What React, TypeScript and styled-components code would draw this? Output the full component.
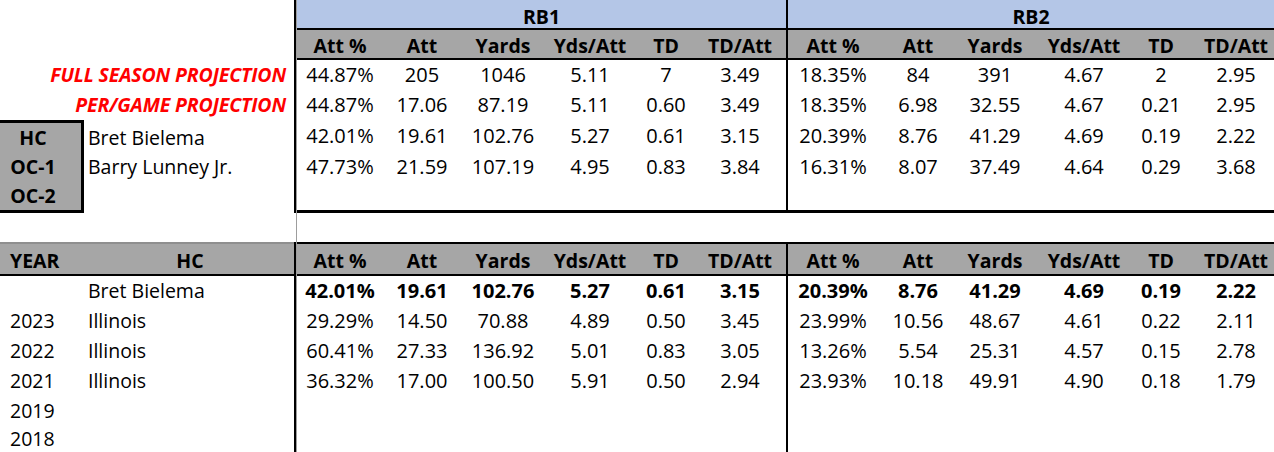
import React from "react";
import styled, { createGlobalStyle } from "styled-components";

const GlobalStyle = createGlobalStyle`
  *, *::before, *::after { box-sizing: border-box; }
  html, body { margin: 0; padding: 0; background: #ffffff; }
  body {
    font-family: "Open Sans", "Liberation Sans", sans-serif;
    font-size: 19.5px;
    color: #000000;
    overflow: hidden;
  }
`;

const BLUE = "#b4c6e7";
const GRAY = "#a6a6a6";

const Sheet = styled.div`
  display: flex;
  width: 1274px;
  height: 452px;
  overflow: hidden;
  line-height: 1;
`;

const LeftPane = styled.div`
  width: 296px;
  flex: none;
  display: flex;
  flex-direction: column;
`;

const RightPane = styled.div`
  flex: 1;
  min-width: 0;
  border-left: 1px solid #9d9d9d;
  display: flex;
  flex-direction: column;
`;

const UpperLeft = styled.div`
  height: 213px;
  flex: none;
  border-right: 2px solid #000;
  padding-top: 60px;
  display: flex;
  flex-direction: column;
`;

const ProjectionLabel = styled.div`
  height: 30px;
  display: flex;
  align-items: center;
  justify-content: flex-end;
  padding-right: 8px;
  color: #ff0000;
  font-weight: 700;
  font-style: italic;
  letter-spacing: -0.15px;
  white-space: nowrap;
`;

const CoachBlock = styled.div`
  display: flex;
`;

const RoleBox = styled.div`
  margin-left: -18px;
  width: 102px;
  border: 3px solid #000;
  background: ${GRAY};
  display: flex;
  flex-direction: column;
`;

const RoleCell = styled.div<{ $h: number }>`
  height: ${(p) => p.$h}px;
  display: flex;
  align-items: center;
  justify-content: center;
  font-weight: 700;
`;

const NameList = styled.div`
  display: flex;
  flex-direction: column;
  padding-top: 3px;
  padding-left: 4px;
`;

const NameCell = styled.div<{ $h: number }>`
  height: ${(p) => p.$h}px;
  display: flex;
  align-items: center;
  white-space: nowrap;
`;

const Gap = styled.div`
  height: 29px;
  flex: none;
`;

const LowerLeft = styled.div`
  flex: 1;
  border-right: 2px solid #000;
  display: flex;
  flex-direction: column;
`;

const LeftHeader = styled.div`
  height: 34px;
  flex: none;
  display: grid;
  grid-template-columns: 86px 1fr;
  align-items: center;
  background: ${GRAY};
  border-top: 2px solid #8f8f8f;
  border-bottom: 2px solid #000;
  padding-top: 3px;
  font-weight: 700;
`;

const YearHead = styled.div`
  padding-left: 10px;
`;

const CoachHead = styled.div`
  text-align: center;
`;

const LeftRow = styled.div<{ $h: number }>`
  height: ${(p) => p.$h}px;
  flex: none;
  display: grid;
  grid-template-columns: 86px 1fr;
  align-items: center;
`;

const YearCell = styled.div`
  padding-left: 10px;
`;

const TeamCell = styled.div`
  padding-left: 2px;
  white-space: nowrap;
`;

const Section = styled.div<{ $upper?: boolean }>`
  display: flex;
  flex: ${(p) => (p.$upper ? "none" : "1")};
  height: ${(p) => (p.$upper ? "213px" : "auto")};
`;

const Group = styled.div<{ $first?: boolean; $upper?: boolean }>`
  width: ${(p) => (p.$first ? "491px" : "auto")};
  flex: ${(p) => (p.$first ? "none" : "1")};
  min-width: 0;
  overflow: hidden;
  display: flex;
  flex-direction: column;
  border-right: ${(p) => (p.$first ? "2px solid #000" : "none")};
  border-bottom: ${(p) => (p.$upper ? "3px solid #000" : "none")};
  border-top: ${(p) => (p.$upper ? "none" : "2px solid #000")};
`;

const Title = styled.div`
  height: 30px;
  flex: none;
  background: ${BLUE};
  border-bottom: 2px solid #000;
  display: flex;
  align-items: center;
  justify-content: center;
  padding-top: 6px;
  font-weight: 700;
`;

const HeaderRow = styled.div<{ $cols: string; $h: number }>`
  height: ${(p) => p.$h}px;
  flex: none;
  display: grid;
  grid-template-columns: ${(p) => p.$cols};
  align-items: center;
  background: ${GRAY};
  border-bottom: 2px solid #000;
  padding-top: 3px;
  font-weight: 700;
  white-space: nowrap;
`;

const DataRow = styled.div<{ $cols: string; $h: number; $bold?: boolean }>`
  height: ${(p) => p.$h}px;
  flex: none;
  display: grid;
  grid-template-columns: ${(p) => p.$cols};
  align-items: center;
  font-size: 20px;
  font-weight: ${(p) => (p.$bold ? 700 : 400)};
  white-space: nowrap;
`;

const Cell = styled.div`
  text-align: center;
`;

const HEADS = ["Att %", "Att", "Yards", "Yds/Att", "TD", "TD/Att"];
const RB1_COLS = "86px 78px 84px 90px 62px 86px";
const RB2_COLS = "90px 80px 74px 104px 50px 100px";

type Row = string[];
const EMPTY: Row = ["", "", "", "", "", ""];

const rb1Upper: Row[] = [
  ["44.87%", "205", "1046", "5.11", "7", "3.49"],
  ["44.87%", "17.06", "87.19", "5.11", "0.60", "3.49"],
  ["42.01%", "19.61", "102.76", "5.27", "0.61", "3.15"],
  ["47.73%", "21.59", "107.19", "4.95", "0.83", "3.84"],
  EMPTY,
];
const rb2Upper: Row[] = [
  ["18.35%", "84", "391", "4.67", "2", "2.95"],
  ["18.35%", "6.98", "32.55", "4.67", "0.21", "2.95"],
  ["20.39%", "8.76", "41.29", "4.69", "0.19", "2.22"],
  ["16.31%", "8.07", "37.49", "4.64", "0.29", "3.68"],
  EMPTY,
];
const rb1Lower: Row[] = [
  ["42.01%", "19.61", "102.76", "5.27", "0.61", "3.15"],
  ["29.29%", "14.50", "70.88", "4.89", "0.50", "3.45"],
  ["60.41%", "27.33", "136.92", "5.01", "0.83", "3.05"],
  ["36.32%", "17.00", "100.50", "5.91", "0.50", "2.94"],
  EMPTY,
  EMPTY,
];
const rb2Lower: Row[] = [
  ["20.39%", "8.76", "41.29", "4.69", "0.19", "2.22"],
  ["23.99%", "10.56", "48.67", "4.61", "0.22", "2.11"],
  ["13.26%", "5.54", "25.31", "4.57", "0.15", "2.78"],
  ["23.93%", "10.18", "49.91", "4.90", "0.18", "1.79"],
  EMPTY,
  EMPTY,
];

const UPPER_HEIGHTS = [30, 30, 32, 30, 28];
const COACH_HEIGHTS = [29, 30, 28];
const LOWER_HEIGHTS = [30, 30, 30, 30, 30, 26];

const coaches = [
  { role: "HC", name: "Bret Bielema" },
  { role: "OC-1", name: "Barry Lunney Jr." },
  { role: "OC-2", name: "" },
];

const history = [
  { year: "", team: "Bret Bielema" },
  { year: "2023", team: "Illinois" },
  { year: "2022", team: "Illinois" },
  { year: "2021", team: "Illinois" },
  { year: "2019", team: "" },
  { year: "2018", team: "" },
];

function StatGroup(props: {
  title?: string;
  cols: string;
  rows: Row[];
  first?: boolean;
  upper?: boolean;
}) {
  const { title, cols, rows, first, upper } = props;
  return (
    <Group $first={first} $upper={upper}>
      {title && <Title>{title}</Title>}
      <HeaderRow $cols={cols} $h={upper ? 30 : 32}>
        {HEADS.map((h) => (
          <Cell key={h}>{h}</Cell>
        ))}
      </HeaderRow>
      {rows.map((r, i) => (
        <DataRow
          key={i}
          $cols={cols}
          $h={upper ? UPPER_HEIGHTS[i] : LOWER_HEIGHTS[i]}
          $bold={!upper && i === 0}
        >
          {r.map((v, j) => (
            <Cell key={j}>{v}</Cell>
          ))}
        </DataRow>
      ))}
    </Group>
  );
}

export default function App() {
  return (
    <>
      <GlobalStyle />
      <Sheet>
        <LeftPane>
          <UpperLeft>
            <ProjectionLabel>FULL SEASON PROJECTION</ProjectionLabel>
            <ProjectionLabel>PER/GAME PROJECTION</ProjectionLabel>
            <CoachBlock>
              <RoleBox>
                {coaches.map((c, i) => (
                  <RoleCell key={c.role} $h={COACH_HEIGHTS[i]}>
                    {c.role}
                  </RoleCell>
                ))}
              </RoleBox>
              <NameList>
                {coaches.map((c, i) => (
                  <NameCell key={c.role} $h={COACH_HEIGHTS[i]}>
                    {c.name}
                  </NameCell>
                ))}
              </NameList>
            </CoachBlock>
          </UpperLeft>
          <Gap />
          <LowerLeft>
            <LeftHeader>
              <YearHead>YEAR</YearHead>
              <CoachHead>HC</CoachHead>
            </LeftHeader>
            {history.map((h, i) => (
              <LeftRow key={i} $h={LOWER_HEIGHTS[i]}>
                <YearCell>{h.year}</YearCell>
                <TeamCell>{h.team}</TeamCell>
              </LeftRow>
            ))}
          </LowerLeft>
        </LeftPane>
        <RightPane>
          <Section $upper>
            <StatGroup title="RB1" cols={RB1_COLS} rows={rb1Upper} first upper />
            <StatGroup title="RB2" cols={RB2_COLS} rows={rb2Upper} upper />
          </Section>
          <Gap />
          <Section>
            <StatGroup cols={RB1_COLS} rows={rb1Lower} first />
            <StatGroup cols={RB2_COLS} rows={rb2Lower} />
          </Section>
        </RightPane>
      </Sheet>
    </>
  );
}
